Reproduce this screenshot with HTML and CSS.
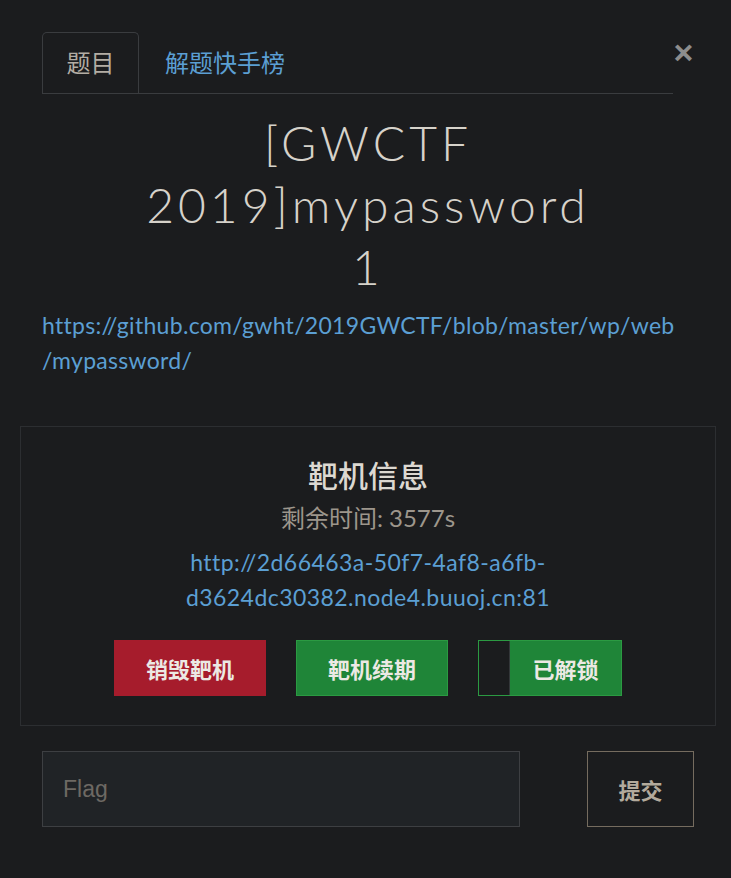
FILE: index.html
```html
<!DOCTYPE html>
<html lang="zh-CN">
<head>
<meta charset="utf-8">
<title>[GWCTF 2019]mypassword 1</title>
<link rel="stylesheet" href="styles.css">
</head>
<body>
<div class="modal">
  <div class="header">
    <ul class="tabs">
      <li><a class="tab active" href="#">题目</a></li>
      <li><a class="tab" href="#">解题快手榜</a></li>
    </ul>
    <button class="close" type="button">×</button>
  </div>
  <h2 class="title">[GWCTF<br>2019]mypassword<br>1</h2>
  <a class="ref" href="#">https://github.com/gwht/2019GWCTF/blob/master/wp/web<br>/mypassword/</a>
  <div class="target">
    <h3 class="target-title">靶机信息</h3>
    <div class="timer">剩余时间: 3577s</div>
    <a class="target-url" href="#">http://2d66463a-50f7-4af8-a6fb-<br>d3624dc30382.node4.buuoj.cn:81</a>
    <div class="actions">
      <button class="btn btn-red" type="button">销毁靶机</button>
      <button class="btn btn-green" type="button">靶机续期</button>
      <button class="btn btn-unlock" type="button"><span class="unlock-bar"></span><span class="unlock-label">已解锁</span></button>
    </div>
  </div>
  <form class="flag-row">
    <input class="flag-input" type="text" placeholder="Flag">
    <button class="submit" type="button">提交</button>
  </form>
</div>
</body>
</html>
```

FILE: styles.css
```css
html, body {
  margin: 0;
  padding: 0;
  background: #1b1c1e;
}
body {
  font-family: Lato, "Noto Sans CJK SC", sans-serif;
  color: #d8d4cc;
}
.modal {
  padding: 32px 37px 0 42px;
}
.header {
  display: flex;
  align-items: flex-start;
}
.tabs {
  flex: 1;
  display: flex;
  list-style: none;
  margin: 0;
  padding: 0;
  border-bottom: 1px solid #3a3c3f;
}
.tab {
  display: block;
  box-sizing: border-box;
  height: 61px;
  line-height: 60px;
  padding: 0 23.5px;
  border: 1px solid transparent;
  border-bottom: 0;
  border-radius: 5px 5px 0 0;
  font-size: 24px;
  color: #5b9fd3;
  text-decoration: none;
}
.tab.active {
  border-color: #3a3c3f;
  color: #b3ada4;
}
.tab:not(.active) {
  padding-left: 25px;
}
.close {
  width: 21px;
  margin-top: 2px;
  padding: 0;
  background: none;
  border: 0;
  font-family: "Liberation Sans", sans-serif;
  font-weight: 700;
  font-size: 34px;
  line-height: 36px;
  color: #8d8d8d;
  text-align: center;
}
.title {
  margin: 18px 0 0;
  text-align: center;
  font-weight: 300;
  font-size: 48px;
  line-height: 62px;
  letter-spacing: 4px;
  color: #d6d2ca;
}
.ref {
  display: block;
  margin-top: 10px;
  font-size: 23px;
  line-height: 35px;
  letter-spacing: 0.3px;
  color: #5b9fd3;
  text-decoration: none;
}
.target {
  margin: 48px -22px 0;
  padding: 27px 0 29px;
  border: 1px solid #2c2e31;
  text-align: center;
}
.target-title {
  margin: 0;
  font-size: 30px;
  font-weight: 500;
  line-height: 42px;
  color: #dcd8d1;
}
.timer {
  font-size: 24px;
  line-height: 44px;
  color: #9d968c;
}
.target-url {
  display: block;
  margin-top: 5px;
  font-size: 23px;
  line-height: 35px;
  letter-spacing: 0.45px;
  color: #5b9fd3;
  text-decoration: none;
}
.actions {
  display: flex;
  justify-content: center;
  gap: 30px;
  margin-top: 25px;
}
.btn {
  box-sizing: border-box;
  width: 152px;
  height: 56px;
  padding: 0;
  border: 1px solid transparent;
  font-family: Lato, "Noto Sans CJK SC", sans-serif;
  font-size: 22px;
  font-weight: 700;
  color: #ece9e4;
}
.btn-red {
  background: #a61c2c;
  border-color: #a61c2c;
}
.btn-green {
  background: #1f8538;
  border-color: #2b9a42;
}
.btn-unlock {
  width: 144px;
  display: flex;
  background: #1f8538;
  border-color: #2b9a42;
}
.unlock-bar {
  width: 30px;
  height: 100%;
  background: #1b1c1e;
  border-right: 1px solid #34373a;
}
.unlock-label {
  flex: 1;
  align-self: center;
  text-align: center;
}
.flag-row {
  display: flex;
  justify-content: space-between;
  margin-top: 25px;
}
.flag-input {
  box-sizing: border-box;
  width: 478px;
  height: 76px;
  padding: 0 20px;
  background: #202326;
  border: 1px solid #3d3f42;
  font-family: "Liberation Sans", Arial, sans-serif;
  font-size: 23px;
  color: #d8d4cc;
  outline: none;
}
.flag-input::placeholder {
  color: #6d6963;
}
.submit {
  box-sizing: border-box;
  width: 107px;
  height: 76px;
  background: #1b1c1e;
  border: 1px solid #756c5f;
  font-family: Lato, "Noto Sans CJK SC", sans-serif;
  font-size: 22px;
  font-weight: 700;
  color: #b3aa9c;
}
```
